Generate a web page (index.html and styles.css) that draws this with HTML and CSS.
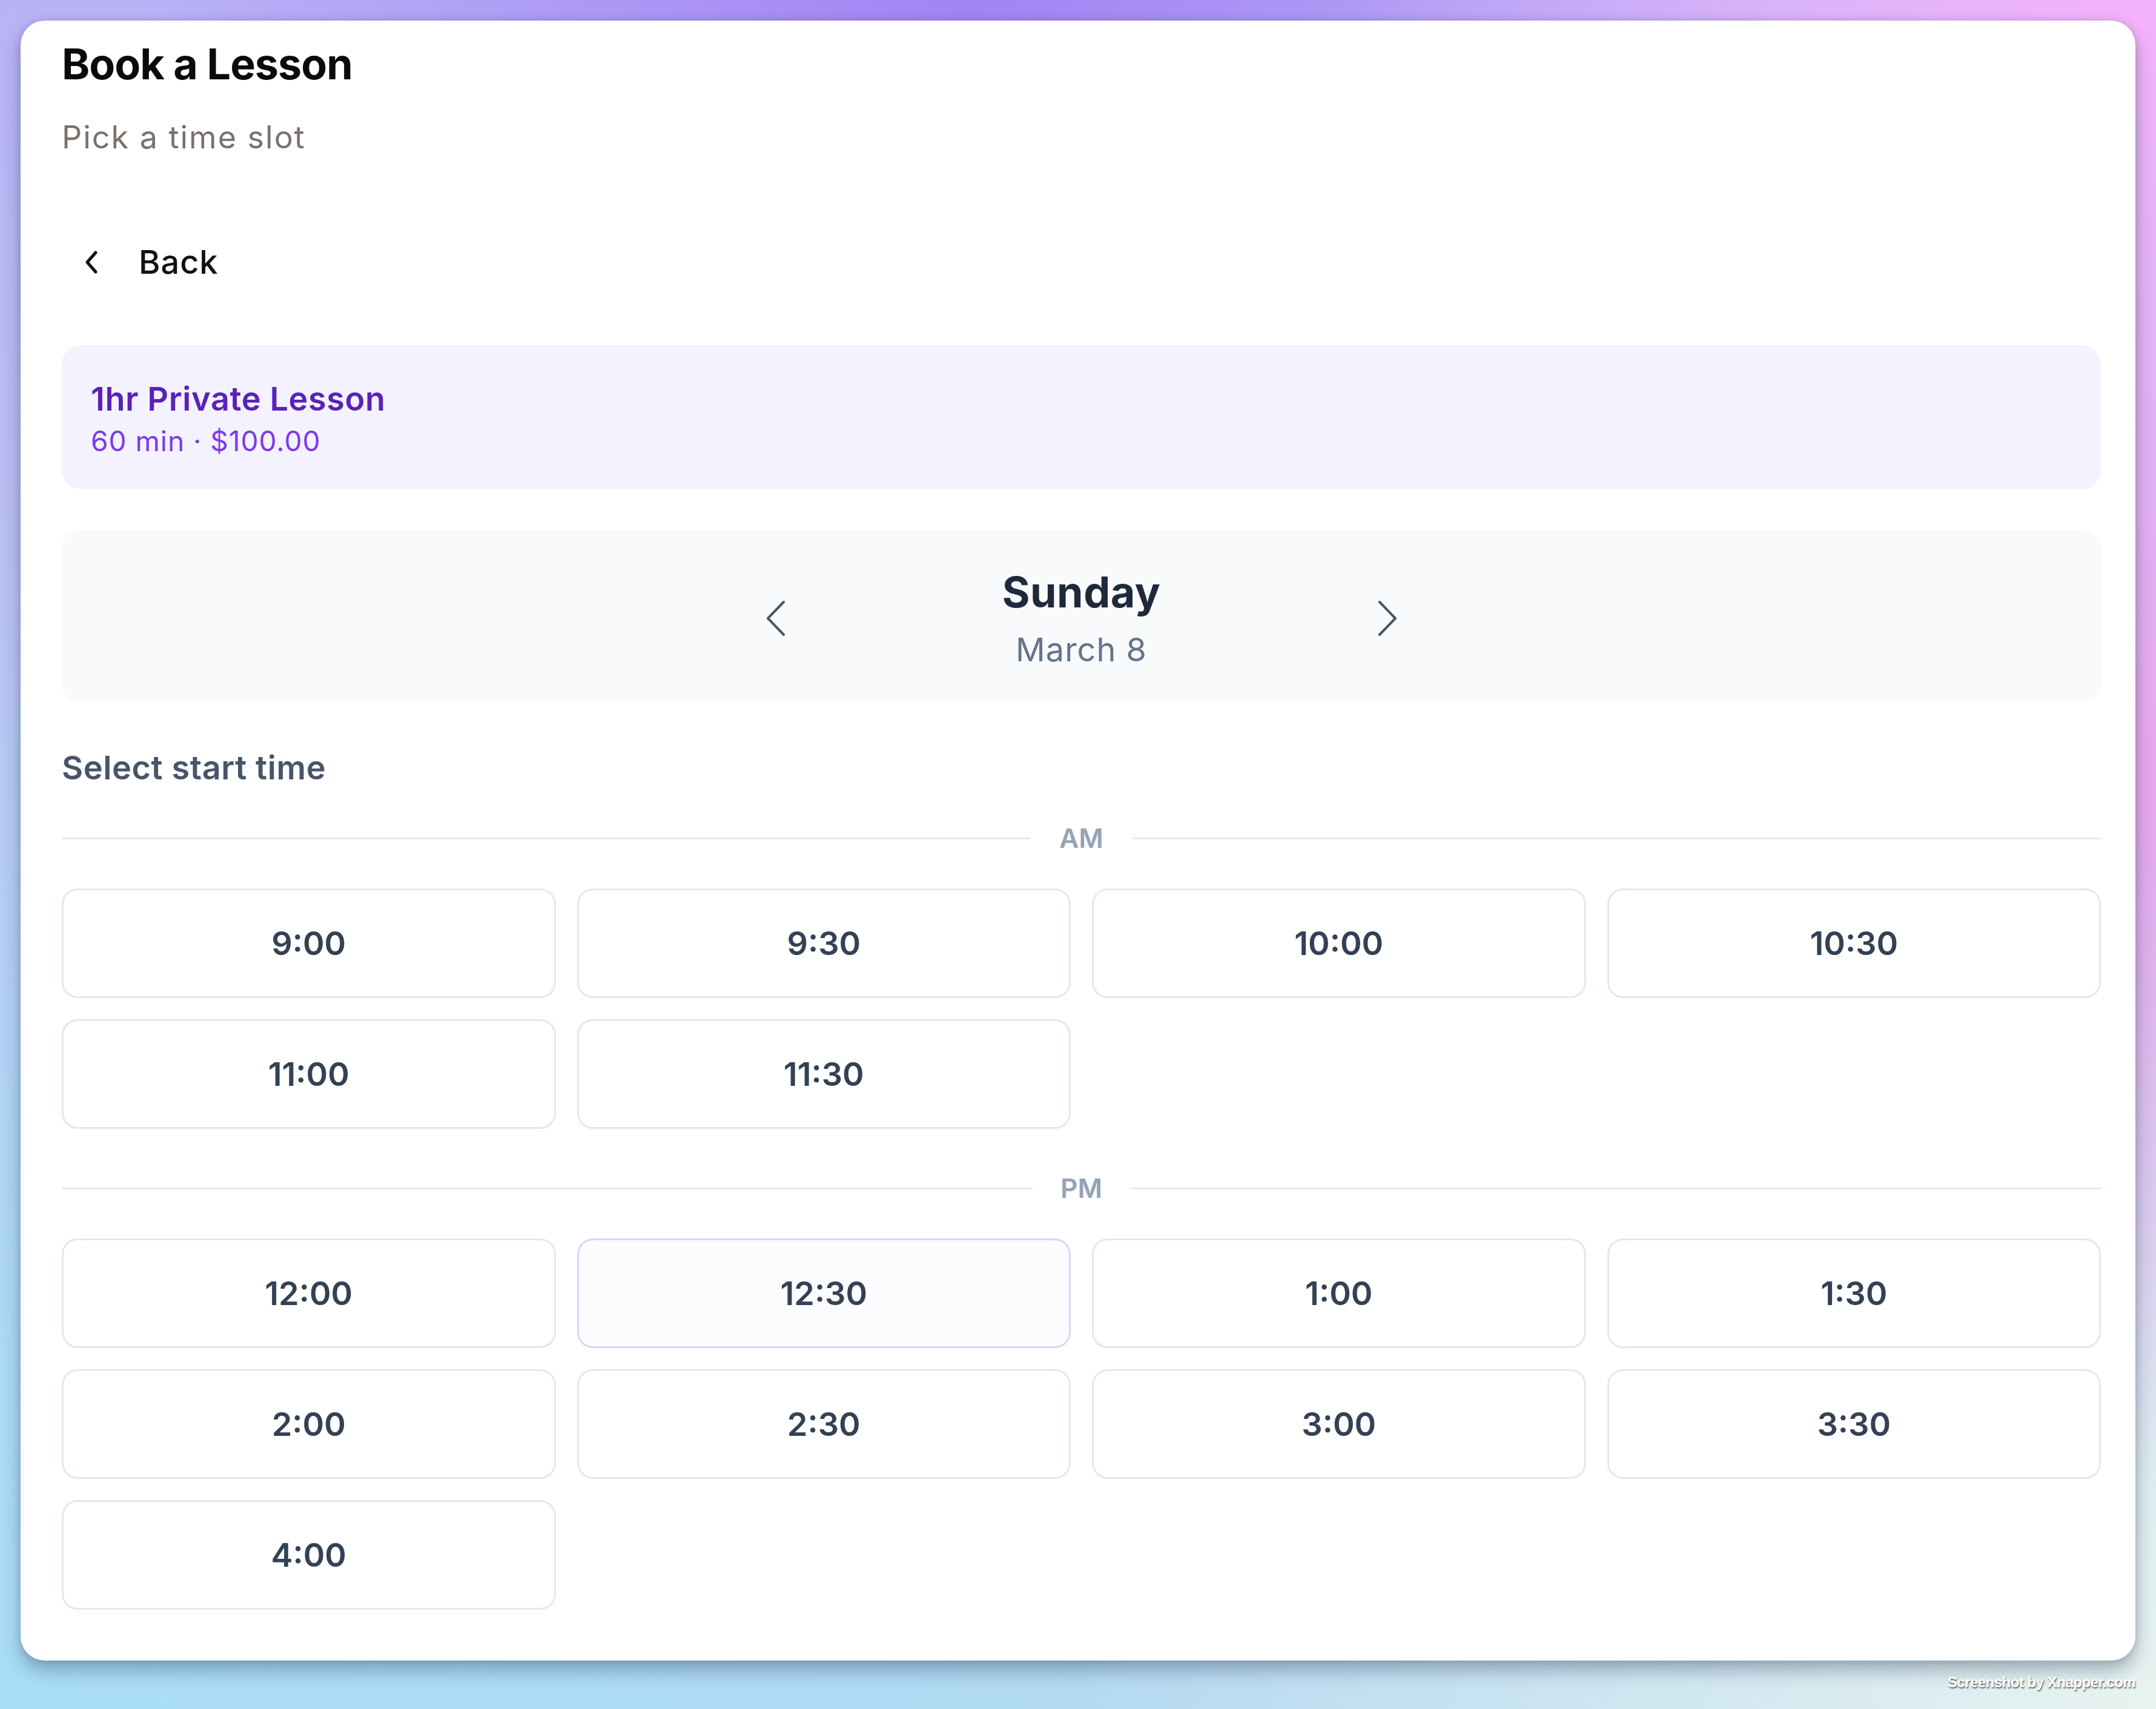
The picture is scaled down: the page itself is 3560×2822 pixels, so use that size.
FILE: index.html
```html
<!DOCTYPE html>
<html lang="en">
  <head>
    <title>Book a Lesson</title>
    <meta charset="utf-8" />
    <meta name="viewport" content="width=device-width, initial-scale=1" />

    <link rel="stylesheet" href="styles.css">
  </head>

  <body>
    <div class="card">
      <h1>Book a Lesson</h1>
      <p class="subtitle">Pick a time slot</p>

      <button class="back">
        <svg width="30" height="40" viewBox="0 0 30 40">
          <polyline points="22,4 8,20 22,36" />
        </svg>
        <span>Back</span>
      </button>

      <div class="lesson">
        <div class="lesson-name">1hr Private Lesson</div>
        <div class="lesson-meta">60 min · $100.00</div>
      </div>

      <div class="day-nav">
        <button class="arrow" id="prevDay">
          <svg width="34" height="60" viewBox="0 0 34 60">
            <polyline points="30,3 4,30 30,57" />
          </svg>
        </button>
        <div class="day">
          <div class="day-name" id="dayName">Sunday</div>
          <div class="day-date" id="dayDate">March 8</div>
        </div>
        <button class="arrow" id="nextDay">
          <svg width="34" height="60" viewBox="0 0 34 60">
            <polyline points="4,3 30,30 4,57" />
          </svg>
        </button>
      </div>

      <h2 class="section-title">Select start time</h2>

      <div class="divider am"><span>AM</span></div>
      <div class="slots" id="amSlots"></div>

      <div class="divider pm"><span>PM</span></div>
      <div class="slots" id="pmSlots"></div>
    </div>

    <div class="credit">Screenshot by Xnapper.com</div>

    <script>
      const am = ["9:00", "9:30", "10:00", "10:30", "11:00", "11:30"];
      const pm = ["12:00", "12:30", "1:00", "1:30", "2:00", "2:30", "3:00", "3:30", "4:00"];
      let selected = "12:30";

      function renderSlots(el, times) {
        el.innerHTML = "";
        times.forEach((t) => {
          const btn = document.createElement("button");
          btn.className = "slot" + (t === selected ? " active" : "");
          btn.textContent = t;
          btn.onclick = () => {
            selected = t;
            renderAll();
          };
          el.appendChild(btn);
        });
      }

      function renderAll() {
        renderSlots(document.querySelector("#amSlots"), am);
        renderSlots(document.querySelector("#pmSlots"), pm);
      }

      renderAll();
    </script>
  </body>
</html>
```

FILE: styles.css
```css
* {
  box-sizing: border-box;
}

html,
body {
  margin: 0;
  height: 100%;
}

body {
  font-family: Inter, "Noto Sans", sans-serif;
  padding: 34px;
  background:
    radial-gradient(circle at 100% 0%, #f6b3fb 0%, rgba(246, 179, 251, 0) 30%),
    radial-gradient(circle at 100% 45%, #e9a6ec 0%, rgba(233, 166, 236, 0) 30%),
    radial-gradient(circle at 100% 100%, #e8f3f0 0%, rgba(232, 243, 240, 0) 40%),
    radial-gradient(circle at 0% 100%, #a9def7 0%, rgba(169, 222, 247, 0) 45%),
    radial-gradient(circle at 45% 0%, #a283f4 0%, rgba(162, 131, 244, 0) 40%),
    linear-gradient(180deg, #b9b3f6 0%, #bcc4f2 50%, #b3d9f2 100%);
  position: relative;
}

button {
  font-family: inherit;
  cursor: pointer;
}

.card {
  background: #fff;
  border-radius: 40px;
  padding: 29px 57px 84px 68px;
  box-shadow: 0 16px 30px rgba(30, 50, 80, 0.35), 0 0 12px rgba(0, 0, 0, 0.12);
}

h1 {
  margin: 0;
  font-size: 70px;
  line-height: 86px;
  font-weight: 700;
  color: #0a0a0a;
  letter-spacing: -1px;
}

.subtitle {
  margin: 48px 0 0;
  font-size: 52px;
  line-height: 60px;
  letter-spacing: 2px;
  color: #78716c;
}

.back {
  display: flex;
  align-items: center;
  gap: 63px;
  margin-top: 144px;
  padding: 0 0 0 34px;
  border: none;
  background: none;
  font-size: 54px;
  line-height: 64px;
  font-weight: 500;
  letter-spacing: 1px;
  color: #111;
}

.back svg polyline {
  fill: none;
  stroke: #111;
  stroke-width: 5;
  stroke-linecap: round;
  stroke-linejoin: round;
}

.lesson {
  margin-top: 105px;
  padding: 58px 48px 52px;
  background: #f4f2ff;
  border-radius: 32px;
}

.lesson-name {
  font-size: 54px;
  line-height: 62px;
  font-weight: 600;
  letter-spacing: 0.6px;
  color: #5b21b6;
}

.lesson-meta {
  margin-top: 10px;
  font-size: 46px;
  line-height: 56px;
  letter-spacing: 1px;
  color: #7c3aed;
}

.day-nav {
  margin-top: 66px;
  padding: 62px 0 55px;
  background: #f8fafc;
  border-radius: 32px;
  display: flex;
  align-items: center;
  justify-content: center;
}

.arrow {
  width: 80px;
  height: 80px;
  border: none;
  background: none;
  display: flex;
  align-items: center;
  justify-content: center;
  padding: 0;
}

.arrow polyline {
  fill: none;
  stroke: #475569;
  stroke-width: 4;
  stroke-linecap: round;
  stroke-linejoin: round;
}

.day {
  width: 930px;
  text-align: center;
}

.day-name {
  font-size: 70px;
  line-height: 84px;
  font-weight: 700;
  letter-spacing: 0.5px;
  color: #1e293b;
}

.day-date {
  margin-top: 21px;
  font-size: 54px;
  line-height: 64px;
  letter-spacing: 1px;
  color: #64748b;
}

.section-title {
  margin: 77px 0 0;
  font-size: 54px;
  line-height: 62px;
  font-weight: 600;
  letter-spacing: 0.6px;
  color: #475569;
}

.divider {
  display: flex;
  align-items: center;
  gap: 48px;
  height: 50px;
  font-size: 44px;
  font-weight: 600;
  color: #94a3b8;
}

.divider::before,
.divider::after {
  content: "";
  flex: 1;
  height: 3px;
  background: #e2e8f0;
}

.divider.am {
  margin-top: 60px;
}

.divider.pm {
  margin-top: 73px;
}

.slots {
  display: grid;
  grid-template-columns: repeat(4, 1fr);
  gap: 35px 35px;
  margin-top: 58px;
}

.slot {
  height: 181px;
  border: 3px solid #e2e8f0;
  border-radius: 26px;
  background: #fff;
  font-size: 54px;
  font-weight: 600;
  color: #334155;
}

.slot.active {
  border-color: #d8d5f6;
  background: #fcfcff;
}

.credit {
  position: absolute;
  right: 34px;
  bottom: 30px;
  font-family: "Liberation Sans", sans-serif;
  font-size: 24px;
  font-weight: 700;
  color: #fff;
  letter-spacing: -0.5px;
  text-shadow: 1px 2px 2px rgba(0, 0, 0, 0.6);
}
```
